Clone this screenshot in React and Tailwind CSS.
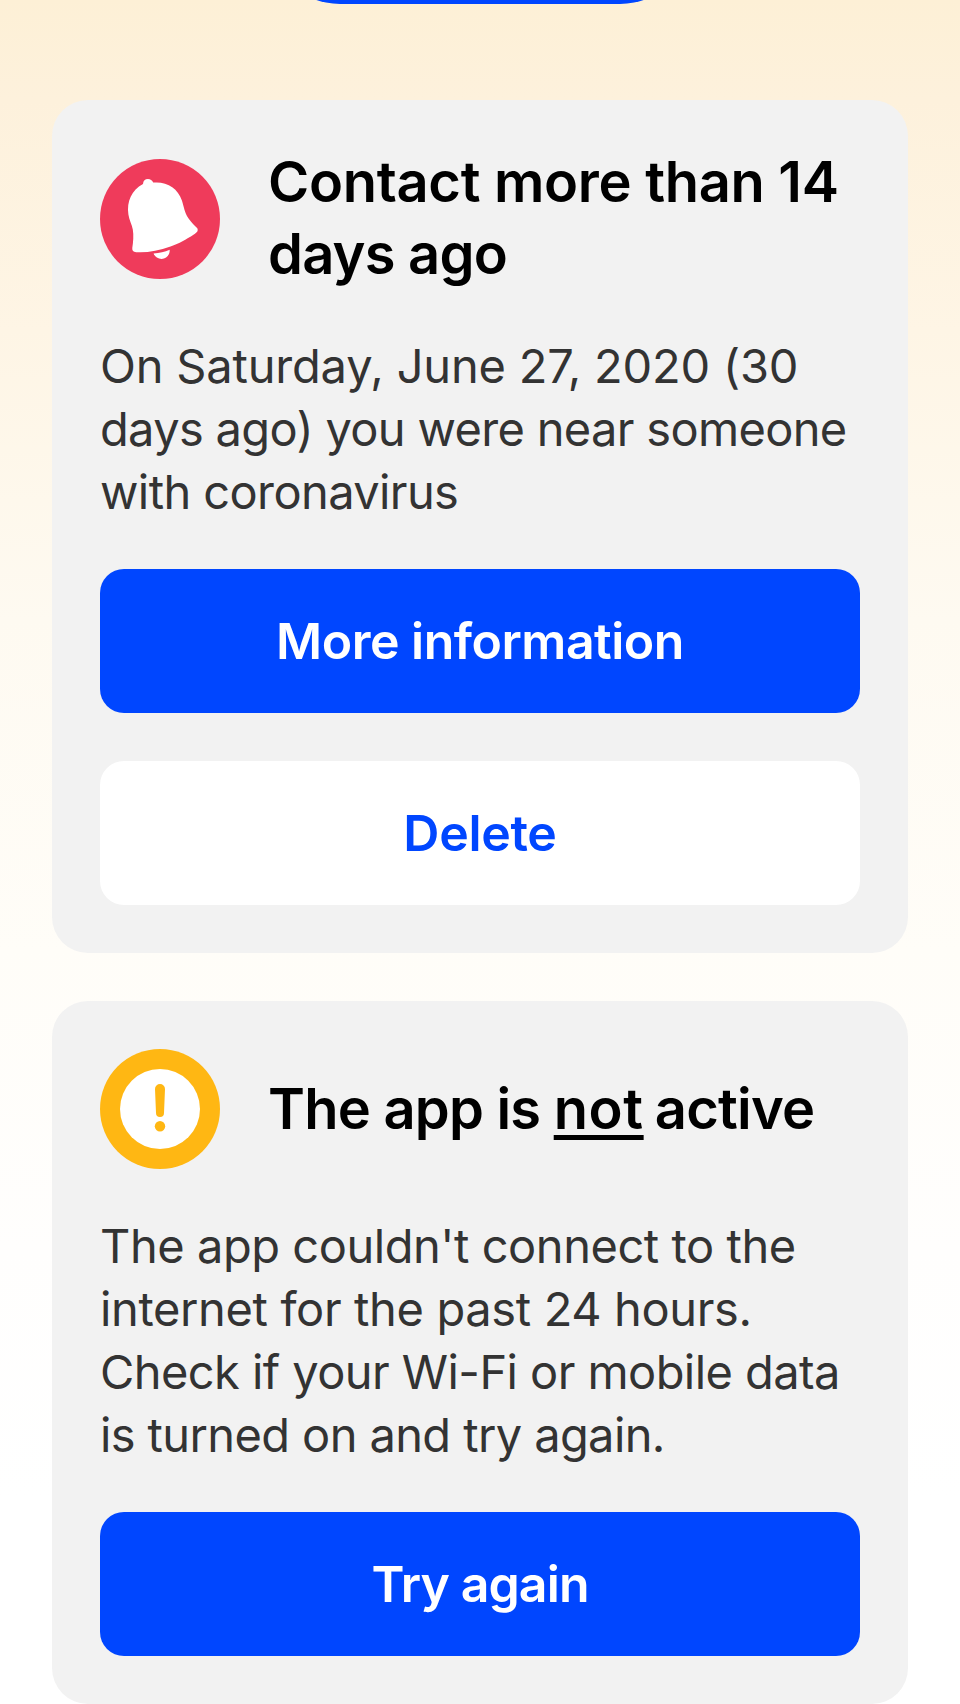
function BellIcon({ className }) {
  return (
    <svg viewBox="0 0 120 120" className={className} aria-hidden="true">
      <circle cx="60" cy="60" r="60" fill="#ef3b5b" />
      <path
        fill="#fff"
        d="M43 25C43.2 21.6 45.1 19.9 47.9 19.9C50.4 19.9 52.2 21.2 53.2 23.6C66.5 22.2 77.8 29 81.9 41.5C83.9 47.5 84.3 53 88.4 59.2C91.4 63.6 94.8 66.5 97.3 69.2C98.7 72.2 96.2 73.9 93.8 75.4C85.8 80.6 79.5 84.2 70.5 87.5C58.5 91.7 46.5 94 36.2 93.2C33.2 92.9 31.9 91.4 32.3 88.7C33.2 83.5 33.8 76 32.8 70.5C31.9 65.2 29.2 61.2 28.4 55.5C26.6 42.4 31.5 31.2 43 25Z"
      />
      <path fill="#fff" d="M53.6 94.4C59.5 94 64.8 92.9 69.7 90.8C69.9 95.9 66.4 99.9 61.6 99.9C58 99.9 54.6 97.8 53.6 94.4Z" />
    </svg>
  )
}

function WarningIcon({ className }) {
  return (
    <svg viewBox="0 0 120 120" className={className} aria-hidden="true">
      <circle cx="60" cy="60" r="60" fill="#ffb713" />
      <circle cx="60" cy="60" r="40" fill="#fff" />
      <path fill="#ffb713" d="M55 40a5 5 0 0 1 10 0L64 64a4 4 0 0 1-8 0Z" />
      <circle cx="60" cy="77.3" r="5.2" fill="#ffb713" />
    </svg>
  )
}

function Button({ className, children }) {
  return (
    <button className={`flex h-36 w-full items-center justify-center rounded-3xl text-[50px] font-semibold ${className}`}>
      {children}
    </button>
  )
}

function Card({ className, children }) {
  return (
    <section className={`flex flex-col rounded-[36px] bg-[#f2f2f2] px-12 pb-12 ${className}`}>{children}</section>
  )
}

export default function App() {
  return (
    <main className="flex h-[1704px] w-[960px] flex-col overflow-hidden bg-[linear-gradient(180deg,#fdf0d6_0px,#fdf1dc_100px,#fef5e5_330px,#fefaf1_620px,#fffdf8_950px,#fffefd_1250px,#ffffff_1500px)] font-['Inter','Liberation_Sans',sans-serif]">
      <div className="flex h-1 shrink-0 items-end justify-center">
        <div className="h-36 w-[424px] shrink-0 rounded-[72px] bg-[#0046ff]" />
      </div>

      <div className="flex flex-col gap-12 px-[52px] pt-24">
        <Card className="pt-[46px]">
          <header className="flex items-start gap-12">
            <BellIcon className="mt-[13px] size-[120px] shrink-0" />
            <h2 className="text-[56px] leading-[72px] font-semibold whitespace-nowrap text-black">
              <span className="block tracking-[-0.3px]">Contact more than 14</span>
              <span className="block tracking-[-0.78px]">days ago</span>
            </h2>
          </header>
          <p className="mt-11 text-[47px] leading-[63px] whitespace-nowrap text-[#333333]">
            <span className="block tracking-[-0.19px]">On Saturday, June 27, 2020 (30</span>
            <span className="block tracking-[-0.67px]">days ago) you were near someone</span>
            <span className="block tracking-[-0.6px]">with coronavirus</span>
          </p>
          <Button className="mt-[46px] bg-[#0046ff] tracking-[-0.49px] text-white">More information</Button>
          <Button className="mt-12 bg-white tracking-[-0.3px] text-[#0046ff]">Delete</Button>
        </Card>

        <Card className="pt-12">
          <header className="flex items-center gap-12">
            <WarningIcon className="size-[120px] shrink-0" />
            <h2 className="text-[56px] leading-[72px] font-semibold whitespace-nowrap text-black">
              <span className="tracking-[-0.77px]">The app is </span>
              <span className="tracking-[0.6px] underline decoration-[5px] underline-offset-[6px]">not</span>
              <span className="tracking-[-3px]"> </span>
              <span className="tracking-[-0.75px]">active</span>
            </h2>
          </header>
          <p className="mt-[45px] text-[47px] leading-[63px] whitespace-nowrap text-[#333333]">
            <span className="block tracking-[-0.45px]">The app couldn't connect to the</span>
            <span className="block tracking-[-0.36px]">internet for the past 24 hours.</span>
            <span className="block tracking-[-0.57px]">Check if your Wi-Fi or mobile data</span>
            <span className="block tracking-[-0.61px]">is turned on and try again.</span>
          </p>
          <Button className="mt-[46px] bg-[#0046ff] tracking-[-0.89px] text-white">Try again</Button>
        </Card>
      </div>
    </main>
  )
}
